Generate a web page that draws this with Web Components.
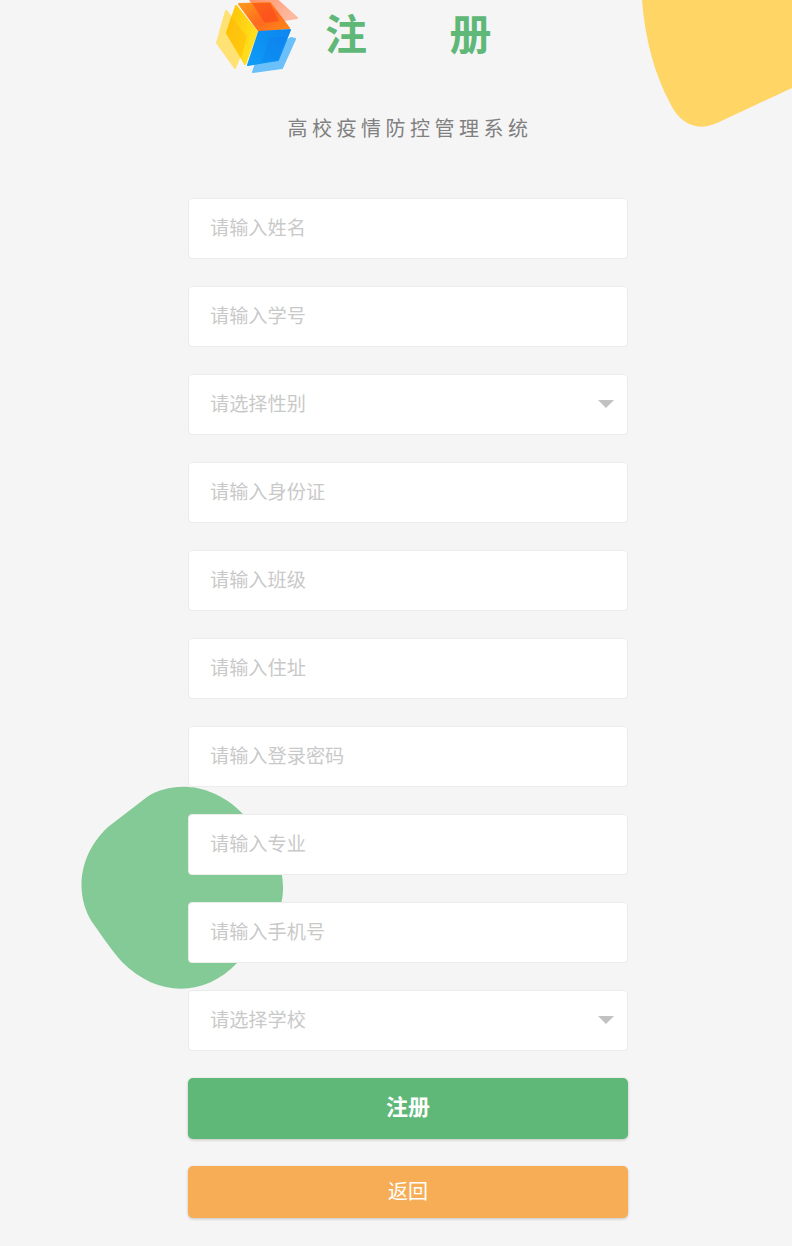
<!DOCTYPE html>
<html lang="zh-CN">
<head>
<meta charset="utf-8">
<title>注册</title>
<style>
    html, body { margin: 0; padding: 0; background: #f5f5f5; }
    body { font-family: "Noto Sans CJK SC", "Noto Sans", sans-serif; }
</style>
</head>
<body>
<register-page>
    <register-header slot="header" title-text="注 册">高校疫情防控管理系统</register-header>
    <form-field>请输入姓名</form-field>
    <form-field>请输入学号</form-field>
    <form-field is-select>请选择性别</form-field>
    <form-field>请输入身份证</form-field>
    <form-field>请输入班级</form-field>
    <form-field>请输入住址</form-field>
    <form-field>请输入登录密码</form-field>
    <form-field>请输入专业</form-field>
    <form-field>请输入手机号</form-field>
    <form-field is-select>请选择学校</form-field>
    <action-button kind="primary">注册</action-button>
    <action-button kind="back">返回</action-button>
</register-page>

<script>
class RegisterPage extends HTMLElement {
    constructor() {
        super();
        this.attachShadow({ mode: 'open' });
        this.shadowRoot.innerHTML = `
            <style>
                :host {
                    display: block;
                    position: relative;
                    height: 1246px;
                    overflow: hidden;
                    background: #f5f5f5;
                }
                .blob {
                    position: absolute;
                    left: 0;
                    top: 0;
                }
                #column {
                    position: relative;
                    width: 440px;
                    margin-left: 188px;
                }
                #form {
                    display: flex;
                    flex-direction: column;
                    gap: 27px;
                }
            </style>

            <svg class="blob" width="792" height="1246" viewBox="0 0 792 1246">
                <path fill="#ffd565" d="M642 0 C645 40 655 75 670 103 C680 124 697 132 717 123 L792 88 V0 Z"/>
                <path fill="#84ca96" d="M108 827 L147 797 C172 781 212 782 243 814 C270 843 284 862 283 890 C282 920 262 945 237 963 C205 997 158 998 122 962 C113 952 102 936 92 922 C76 897 76 857 108 827 Z"/>
            </svg>
            <div id="column">
                <slot name="header"></slot>
                <div id="form"><slot></slot></div>
            </div>
        `;
    }
}

class RegisterHeader extends HTMLElement {
    constructor() {
        super();
        this.attachShadow({ mode: 'open' });
        this.shadowRoot.innerHTML = `
            <style>
                :host {
                    display: block;
                    height: 198px;
                }
                #top {
                    display: flex;
                    align-items: flex-start;
                    padding-left: 27px;
                    height: 76px;
                }
                svg {
                    display: block;
                    flex: none;
                }
                h1 {
                    margin: 7px 0 0 26px;
                    font-size: 42px;
                    line-height: 50px;
                    font-weight: 700;
                    color: #5fb878;
                    word-spacing: 73px;
                    white-space: nowrap;
                }
                p {
                    margin: 40px 0 0;
                    padding-left: 4px;
                    text-align: center;
                    font-size: 20px;
                    line-height: 24px;
                    letter-spacing: 4.5px;
                    color: #808080;
                    white-space: nowrap;
                }
            </style>

            <div id="top">
                <svg width="84" height="76" viewBox="215 0 84 76">
                    <defs>
                        <linearGradient id="top-face" x1="0" y1="0" x2="1" y2="1">
                            <stop offset="0" stop-color="#ff9a1a"/>
                            <stop offset="0.55" stop-color="#ff6a20"/>
                            <stop offset="1" stop-color="#ff8a14"/>
                        </linearGradient>
                        <linearGradient id="left-face" x1="0" y1="0" x2="1" y2="0.6">
                            <stop offset="0" stop-color="#ffc107"/>
                            <stop offset="1" stop-color="#ffe21f"/>
                        </linearGradient>
                        <linearGradient id="right-face" x1="0" y1="1" x2="1" y2="0">
                            <stop offset="0" stop-color="#0a9cf5"/>
                            <stop offset="1" stop-color="#0a86f0"/>
                        </linearGradient>
                        <linearGradient id="back-face" x1="0" y1="0" x2="1" y2="0.4">
                            <stop offset="0" stop-color="#ff8f66"/>
                            <stop offset="1" stop-color="#fdb9a0"/>
                        </linearGradient>
                        <filter id="soft"><feGaussianBlur stdDeviation="0.4"/></filter>
                    </defs>
                    <g filter="url(#soft)" stroke-linejoin="round" stroke-width="2">
                        <path fill="#ffe273" stroke="#ffe273" d="M226 11 L248 36 L235 68 L217 43 Z"/>
                        <path fill="url(#back-face)" stroke="url(#back-face)" d="M249 -2 L275 -2 L297 18 L265 23 Z"/>
                        <path fill="#6cc0fa" stroke="#6cc0fa" d="M291 38 L295 39 L282 68 L253 72 L257 60 Z"/>
                        <path fill="url(#left-face)" stroke="url(#left-face)" d="M236 6 L257 32 L245 64 L227 33 Z"/>
                        <path fill="url(#top-face)" stroke="url(#top-face)" d="M239 4 L270 3 L289 28 L259 31 Z"/>
                        <path fill="url(#right-face)" stroke="url(#right-face)" d="M259 32 L290 30 L278 60 L248 65 Z"/>
                        <path fill="#ffb800" opacity="0.5" d="M231 17 L247 36 L241 58 L226 33 Z"/>
                        <path fill="#f9421c" opacity="0.55" d="M252 3 L270 3 L279 21 L265 23 Z"/>
                        <path fill="#0670ea" opacity="0.2" d="M269 37 L286 37 L278 60 L262 62 Z"/>
                    </g>
                </svg>
                <h1>${this.getAttribute('title-text')}</h1>
            </div>
            <p><slot></slot></p>
        `;
    }
}

class FormField extends HTMLElement {
    constructor() {
        super();
        this.attachShadow({ mode: 'open' });
        this.shadowRoot.innerHTML = `
            <style>
                :host {
                    display: flex;
                    align-items: center;
                    justify-content: space-between;
                    box-sizing: border-box;
                    height: 61px;
                    padding: 0 13px 4px 21px;
                    background: #fff;
                    border: 1px solid #ececec;
                    border-radius: 4px;
                    font-size: 19.2px;
                    color: #c9c9c9;
                    position: relative;
                }
                #arrow {
                    display: none;
                    width: 0;
                    height: 0;
                    border-style: solid;
                    border-width: 8px 8px 0;
                    border-color: #c2c2c2 transparent transparent;
                    margin-top: 3px;
                }
                :host([is-select]) #arrow {
                    display: block;
                }
            </style>

            <span><slot></slot></span>
            <span id="arrow"></span>
        `;
    }
}

class ActionButton extends HTMLElement {
    constructor() {
        super();
        this.attachShadow({ mode: 'open' });
        this.shadowRoot.innerHTML = `
            <style>
                :host {
                    display: flex;
                    align-items: center;
                    justify-content: center;
                    height: 61px;
                    padding-bottom: 7px;
                    box-sizing: border-box;
                    border-radius: 5px;
                    color: #fff;
                    font-size: 22px;
                    font-weight: 700;
                    background: #5fb878;
                    box-shadow: 0 1px 3px rgba(0, 0, 0, 0.2);
                    position: relative;
                }
                :host([kind="back"]) {
                    height: 52px;
                    padding-bottom: 4px;
                    font-size: 20px;
                    font-weight: 400;
                    background: #f7ad56;
                }
            </style>

            <slot></slot>
        `;
    }
}

customElements.define('register-page', RegisterPage);
customElements.define('register-header', RegisterHeader);
customElements.define('form-field', FormField);
customElements.define('action-button', ActionButton);
</script>
</body>
</html>
